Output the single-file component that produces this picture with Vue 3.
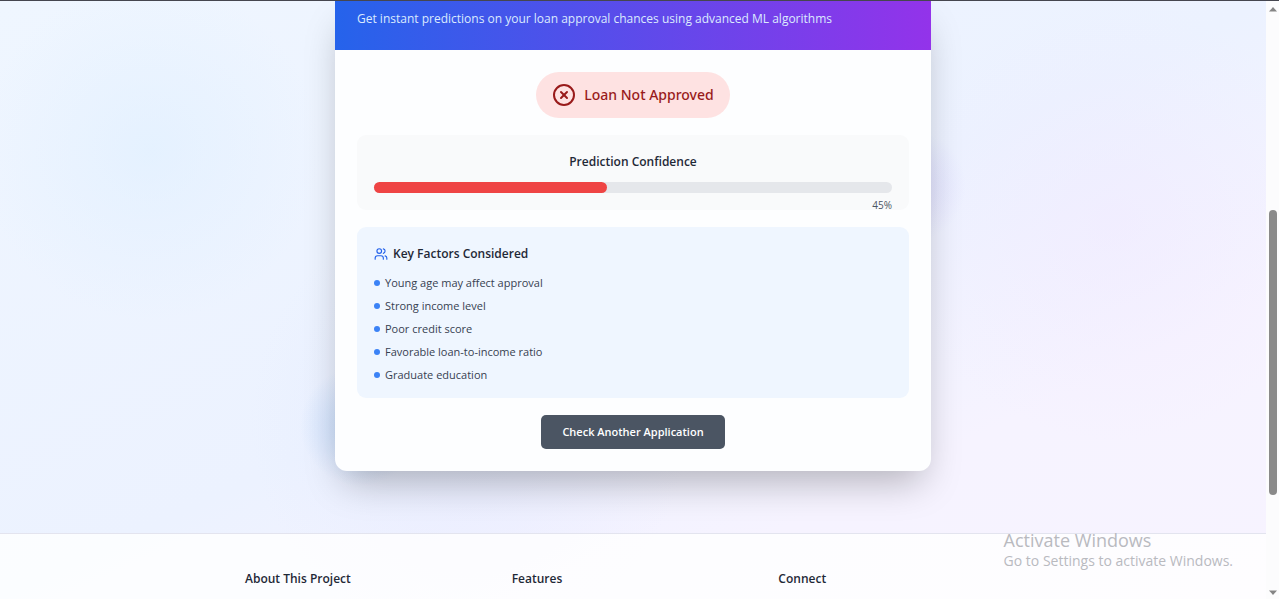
<script setup>
const confidence = 45
const factors = [
  'Young age may affect approval',
  'Strong income level',
  'Poor credit score',
  'Favorable loan-to-income ratio',
  'Graduate education',
]
const footerColumns = ['About This Project', 'Features', 'Connect']
</script>

<template>
  <div class="window">
    <div class="viewport">
      <div class="page">
        <main class="main">
          <article class="card">
            <header class="card-header">
              <p>Get instant predictions on your loan approval chances using advanced ML algorithms</p>
            </header>

            <div class="card-body">
              <div class="status">
                <svg viewBox="0 0 24 24" aria-hidden="true">
                  <circle cx="12" cy="12" r="10" />
                  <path d="m15 9-6 6" />
                  <path d="m9 9 6 6" />
                </svg>
                <span>Loan Not Approved</span>
              </div>

              <section class="confidence">
                <h3>Prediction Confidence</h3>
                <div
                  class="track"
                  role="progressbar"
                  aria-label="Prediction Confidence"
                  :aria-valuenow="confidence"
                  aria-valuemin="0"
                  aria-valuemax="100"
                >
                  <div class="fill" :style="{ width: confidence + '%' }"></div>
                </div>
                <p class="percent">{{ confidence }}%</p>
              </section>

              <section class="factors">
                <h3>
                  <svg viewBox="0 0 24 24" aria-hidden="true">
                    <path d="M16 21v-2a4 4 0 0 0-4-4H6a4 4 0 0 0-4 4v2" />
                    <circle cx="9" cy="7" r="4" />
                    <path d="M22 21v-2a4 4 0 0 0-3-3.87" />
                    <path d="M16 3.13a4 4 0 0 1 0 7.75" />
                  </svg>
                  Key Factors Considered
                </h3>
                <ul>
                  <li v-for="factor in factors" :key="factor">{{ factor }}</li>
                </ul>
              </section>

              <button type="button" class="again">Check Another Application</button>
            </div>
          </article>
        </main>

        <footer class="footer">
          <div class="footer-grid">
            <h3 v-for="title in footerColumns" :key="title">{{ title }}</h3>
          </div>
        </footer>
      </div>

      <div class="scrollbar" aria-hidden="true">
        <svg viewBox="0 0 10 6"><path d="M5 0 10 5.500H0z" /></svg>
        <div class="rail"><div class="thumb"></div></div>
        <svg viewBox="0 0 10 6"><path d="M0 .5h10L5 6z" /></svg>
      </div>
    </div>

    <div class="watermark">
      <p class="watermark-title">Activate Windows</p>
      <p>Go to Settings to activate Windows.</p>
    </div>
  </div>
</template>

<style>
body {
  margin: 0;
}
</style>

<style scoped>
.window {
  position: relative;
  display: flex;
  flex-direction: column;
  height: 100vh;
  overflow: hidden;
  box-sizing: border-box;
  border-top: 1px solid #45464f;
  font-family: "Segoe UI", "Open Sans", "Noto Sans", sans-serif;
  color: #1f2937;
}

h3,
p,
ul {
  margin: 0;
  padding: 0;
}

h3 {
  font-size: 12px;
  line-height: 20px;
  font-weight: 600;
}

.viewport {
  flex: 1;
  min-height: 0;
  display: flex;
}

.page {
  flex: 1;
  min-width: 0;
  display: flex;
  flex-direction: column;
  background:
    radial-gradient(circle 170px at 150px 150px, rgba(215, 236, 255, 0.4), transparent),
    radial-gradient(circle 220px at 88% 220px, rgba(240, 228, 255, 0.35), transparent),
    radial-gradient(circle 56px at 910px 185px, rgba(165, 150, 250, 0.22), transparent),
    radial-gradient(circle 60px at 360px 425px, rgba(90, 160, 240, 0.28), transparent),
    radial-gradient(circle 220px at 470px 420px, rgba(210, 218, 255, 0.25), transparent),
    linear-gradient(to bottom right, #eff6ff, #ecf2ff 50%, #f6f3ff 75%, #f7f3ff);
}

.main {
  display: flex;
  justify-content: center;
  padding: 0 24px 62px;
}

.card {
  width: 100%;
  max-width: 596px;
  overflow: hidden;
  border-radius: 0 0 12px 12px;
  background: #fdfeff;
  box-shadow: 0 19px 38px -9px rgba(0, 0, 0, 0.28);
}

.card-header {
  padding: 8px 22px 21px;
  background: linear-gradient(to right, #2563eb, #9333ea);
  color: #dbeafe;
  font-size: 12px;
  line-height: 20px;
}

.card-body {
  display: flex;
  flex-direction: column;
  align-items: center;
  gap: 17px;
  padding: 22px 22px 22px;
}

.status {
  display: flex;
  align-items: center;
  gap: 8px;
  padding: 11px 16px;
  border-radius: 24px;
  background: #fee2e2;
  color: #991b1b;
  font-family: "Segoe UI", "Noto Sans", "Open Sans", sans-serif;
  font-size: 14px;
  line-height: 24px;
  font-weight: 500;
}

svg {
  fill: none;
  stroke: currentColor;
  stroke-width: 2;
  stroke-linecap: round;
  stroke-linejoin: round;
}

.status svg {
  width: 24px;
  height: 24px;
}

.confidence,
.factors {
  align-self: stretch;
  border-radius: 9px;
}

.confidence {
  height: 58px;
  padding: 17px 17px 0;
  background: #f9fafb;
}

.confidence h3 {
  text-align: center;
  margin-bottom: 10px;
}

.track {
  height: 11px;
  border-radius: 6px;
  background: #e5e7eb;
}

.fill {
  height: 100%;
  border-radius: 6px;
  background: #ef4444;
}

.percent {
  margin-top: 4px;
  color: #4b5563;
  font-size: 10px;
  line-height: 16px;
  text-align: right;
}

.factors {
  padding: 17px 17px 15px;
  background: #eff6ff;
}

.factors h3 {
  display: flex;
  align-items: center;
  gap: 5px;
  margin-bottom: 11px;
}

.factors h3 svg {
  width: 14px;
  height: 14px;
  color: #2563eb;
}

ul {
  display: grid;
  gap: 7px;
  list-style: none;
}

li {
  display: flex;
  align-items: center;
  gap: 5px;
  color: #374151;
  font-size: 11px;
  line-height: 16px;
}

li::before {
  content: "";
  width: 6px;
  height: 6px;
  border-radius: 50%;
  background: #3b82f6;
}

.again {
  padding: 8px 21px;
  border: 0;
  border-radius: 5px;
  background: #4b5563;
  color: #fff;
  font: 600 11px/18px "Segoe UI", "Open Sans", "Noto Sans", sans-serif;
}

.footer {
  flex: 1;
  padding: 35px 24px 0;
  border-top: 1px solid #e3e4ef;
  background: rgba(255, 255, 255, 0.8);
}

.footer-grid {
  display: grid;
  grid-template-columns: repeat(3, 1fr);
  gap: 24px;
  max-width: 776px;
  margin: 0 auto;
}

.scrollbar {
  display: flex;
  flex-direction: column;
  align-items: center;
  width: 13px;
  padding: 6px 0 4px;
  box-sizing: border-box;
  background: #fcfcfd;
}

.scrollbar svg {
  width: 8px;
  height: 5px;
  fill: #858585;
  stroke: none;
}

.rail {
  flex: 1;
  display: flex;
  flex-direction: column;
  padding-top: 198px;
}

.thumb {
  width: 8px;
  height: 75%;
  border-radius: 4px;
  background: #8a8a8a;
}

.watermark {
  position: absolute;
  right: 46px;
  bottom: 28px;
  color: #b9babf;
  font-size: 14px;
  line-height: 20px;
}

.watermark-title {
  font-size: 18px;
  line-height: 22px;
}
</style>
